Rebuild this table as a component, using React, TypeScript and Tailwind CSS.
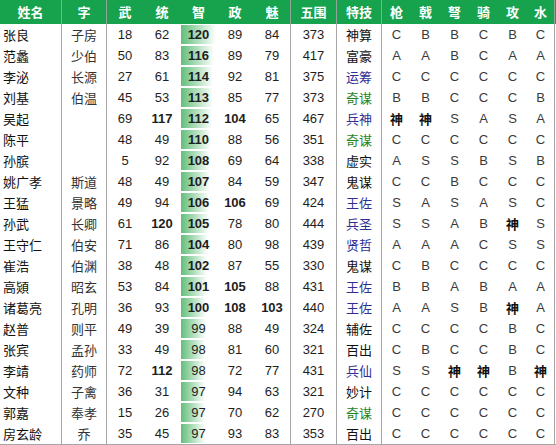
import React from "react";

type Row = {
  name: string;
  zi: string;
  wu: number;
  tong: number;
  zhi: number;
  zheng: number;
  mei: number;
  total: number;
  skill: string;
  skillColor: "k" | "b" | "g";
  grades: string[];
};

const rows: Row[] = [
  { name: "张良", zi: "子房", wu: 18, tong: 62, zhi: 120, zheng: 89, mei: 84, total: 373, skill: "神算", skillColor: "k", grades: ["C", "B", "B", "C", "B", "C"] },
  { name: "范蠡", zi: "少伯", wu: 50, tong: 83, zhi: 116, zheng: 89, mei: 79, total: 417, skill: "富豪", skillColor: "k", grades: ["A", "A", "B", "C", "A", "A"] },
  { name: "李泌", zi: "长源", wu: 27, tong: 61, zhi: 114, zheng: 92, mei: 81, total: 375, skill: "运筹", skillColor: "b", grades: ["C", "C", "C", "C", "C", "C"] },
  { name: "刘基", zi: "伯温", wu: 45, tong: 53, zhi: 113, zheng: 85, mei: 77, total: 373, skill: "奇谋", skillColor: "g", grades: ["B", "B", "C", "C", "C", "B"] },
  { name: "吴起", zi: "", wu: 69, tong: 117, zhi: 112, zheng: 104, mei: 65, total: 467, skill: "兵神", skillColor: "b", grades: ["神", "神", "S", "A", "S", "A"] },
  { name: "陈平", zi: "", wu: 48, tong: 49, zhi: 110, zheng: 88, mei: 56, total: 351, skill: "奇谋", skillColor: "g", grades: ["C", "C", "C", "C", "C", "C"] },
  { name: "孙膑", zi: "", wu: 5, tong: 92, zhi: 108, zheng: 69, mei: 64, total: 338, skill: "虚实", skillColor: "k", grades: ["A", "S", "S", "B", "S", "B"] },
  { name: "姚广孝", zi: "斯道", wu: 48, tong: 49, zhi: 107, zheng: 84, mei: 59, total: 347, skill: "鬼谋", skillColor: "k", grades: ["C", "C", "B", "C", "C", "C"] },
  { name: "王猛", zi: "景略", wu: 49, tong: 94, zhi: 106, zheng: 106, mei: 69, total: 424, skill: "王佐", skillColor: "b", grades: ["S", "A", "S", "A", "S", "C"] },
  { name: "孙武", zi: "长卿", wu: 61, tong: 120, zhi: 105, zheng: 78, mei: 80, total: 444, skill: "兵圣", skillColor: "b", grades: ["S", "S", "A", "B", "神", "S"] },
  { name: "王守仁", zi: "伯安", wu: 71, tong: 86, zhi: 104, zheng: 80, mei: 98, total: 439, skill: "贤哲", skillColor: "b", grades: ["A", "A", "A", "C", "S", "S"] },
  { name: "崔浩", zi: "伯渊", wu: 38, tong: 48, zhi: 102, zheng: 87, mei: 55, total: 330, skill: "鬼谋", skillColor: "k", grades: ["C", "B", "C", "C", "C", "C"] },
  { name: "高熲", zi: "昭玄", wu: 53, tong: 84, zhi: 101, zheng: 105, mei: 88, total: 431, skill: "王佐", skillColor: "b", grades: ["B", "B", "A", "B", "A", "A"] },
  { name: "诸葛亮", zi: "孔明", wu: 36, tong: 93, zhi: 100, zheng: 108, mei: 103, total: 440, skill: "王佐", skillColor: "b", grades: ["A", "A", "S", "B", "神", "A"] },
  { name: "赵普", zi: "则平", wu: 49, tong: 39, zhi: 99, zheng: 88, mei: 49, total: 324, skill: "辅佐", skillColor: "k", grades: ["C", "C", "C", "C", "B", "C"] },
  { name: "张宾", zi: "孟孙", wu: 33, tong: 49, zhi: 98, zheng: 81, mei: 60, total: 321, skill: "百出", skillColor: "k", grades: ["C", "B", "C", "C", "B", "C"] },
  { name: "李靖", zi: "药师", wu: 72, tong: 112, zhi: 98, zheng: 72, mei: 77, total: 431, skill: "兵仙", skillColor: "b", grades: ["S", "S", "神", "神", "B", "神"] },
  { name: "文种", zi: "子禽", wu: 36, tong: 31, zhi: 97, zheng: 94, mei: 63, total: 321, skill: "妙计", skillColor: "k", grades: ["C", "C", "C", "C", "C", "C"] },
  { name: "郭嘉", zi: "奉孝", wu: 15, tong: 26, zhi: 97, zheng: 70, mei: 62, total: 270, skill: "奇谋", skillColor: "g", grades: ["C", "C", "C", "C", "C", "C"] },
  { name: "房玄龄", zi: "乔", wu: 35, tong: 45, zhi: 97, zheng: 93, mei: 83, total: 353, skill: "百出", skillColor: "k", grades: ["C", "C", "C", "C", "C", "C"] },
];

const GRID =
  "grid grid-cols-[62px_45px_36px_38px_35px_38px_37px_46px_45px_29px_29px_29px_29px_29px_28px]";

const CJK = "font-['Noto_Sans_CJK_SC','Noto_Sans',sans-serif]";
const NUM = "font-['Liberation_Sans','Noto_Sans_CJK_SC',sans-serif]";

const headers = ["姓名", "字", "武", "统", "智", "政", "魅", "五围", "特技", "枪", "戟", "弩", "骑", "攻", "水"];
const borderCols = new Set([0, 1, 6, 7, 8, 14]);

function Num({ v, bold, border }: { v: number; bold?: boolean; border?: boolean }) {
  return (
    <div
      className={`${NUM} flex items-center justify-center text-[13px] text-[#1e1e1e] ${
        bold ? "font-bold" : ""
      } ${border ? "border-r border-[#a6a6a6]" : ""}`}
    >
      {v}
    </div>
  );
}

export default function App() {
  return (
    <div className="w-[556px] h-[445px] bg-white overflow-hidden">
      <div className={`${GRID} h-[24px] bg-[#17a34e]`}>
        {headers.map((h, i) => (
          <div
            key={i}
            className={`${CJK} flex items-center justify-center text-[13px] font-bold text-white ${
              borderCols.has(i) ? "border-r border-[#8fa597]" : ""
            }`}
          >
            {h}
          </div>
        ))}
      </div>
      <div className="border-b border-[#a6a6a6]">
        {rows.map((r, idx) => {
          const barW = Math.round(24 + ((r.zhi - 97) / 23) * 11);
          const skillCls =
            r.skillColor === "b"
              ? "text-[#2e2e96]"
              : r.skillColor === "g"
              ? "text-[#1f861f]"
              : "text-[#111]";
          return (
            <div key={idx} className={`${GRID} h-[21px]`}>
              <div
                className={`${CJK} flex items-center pl-[3px] text-[13px] text-[#111] border-r border-[#a6a6a6]`}
              >
                {r.name}
              </div>
              <div
                className={`${CJK} flex items-center justify-center text-[13px] text-[#333] border-r border-[#a6a6a6]`}
              >
                {r.zi}
              </div>
              <Num v={r.wu} bold={r.wu >= 100} />
              <Num v={r.tong} bold={r.tong >= 100} />
              <div
                className={`${NUM} flex items-center justify-center text-[13px] text-[#1e1e1e] bg-no-repeat bg-[position:0_1px] bg-[linear-gradient(to_right,#63be7b,#ffffff)] ${
                  r.zhi >= 100 ? "font-bold" : ""
                }`}
                style={{ backgroundSize: `${barW}px 19px` }}
              >
                {r.zhi}
              </div>
              <Num v={r.zheng} bold={r.zheng >= 100} />
              <Num v={r.mei} bold={r.mei >= 100} border />
              <Num v={r.total} border />
              <div
                className={`${CJK} flex items-center justify-center text-[13px] border-r border-[#a6a6a6] ${skillCls}`}
              >
                {r.skill}
              </div>
              {r.grades.map((g, gi) => (
                <div
                  key={gi}
                  className={`flex items-center justify-center text-[13px] ${
                    gi === 5 ? "border-r border-[#a6a6a6]" : ""
                  } ${
                    g === "神"
                      ? `${CJK} font-bold text-[#111]`
                      : `${NUM} text-[#3a3a3a]`
                  }`}
                >
                  {g}
                </div>
              ))}
            </div>
          );
        })}
      </div>
    </div>
  );
}
